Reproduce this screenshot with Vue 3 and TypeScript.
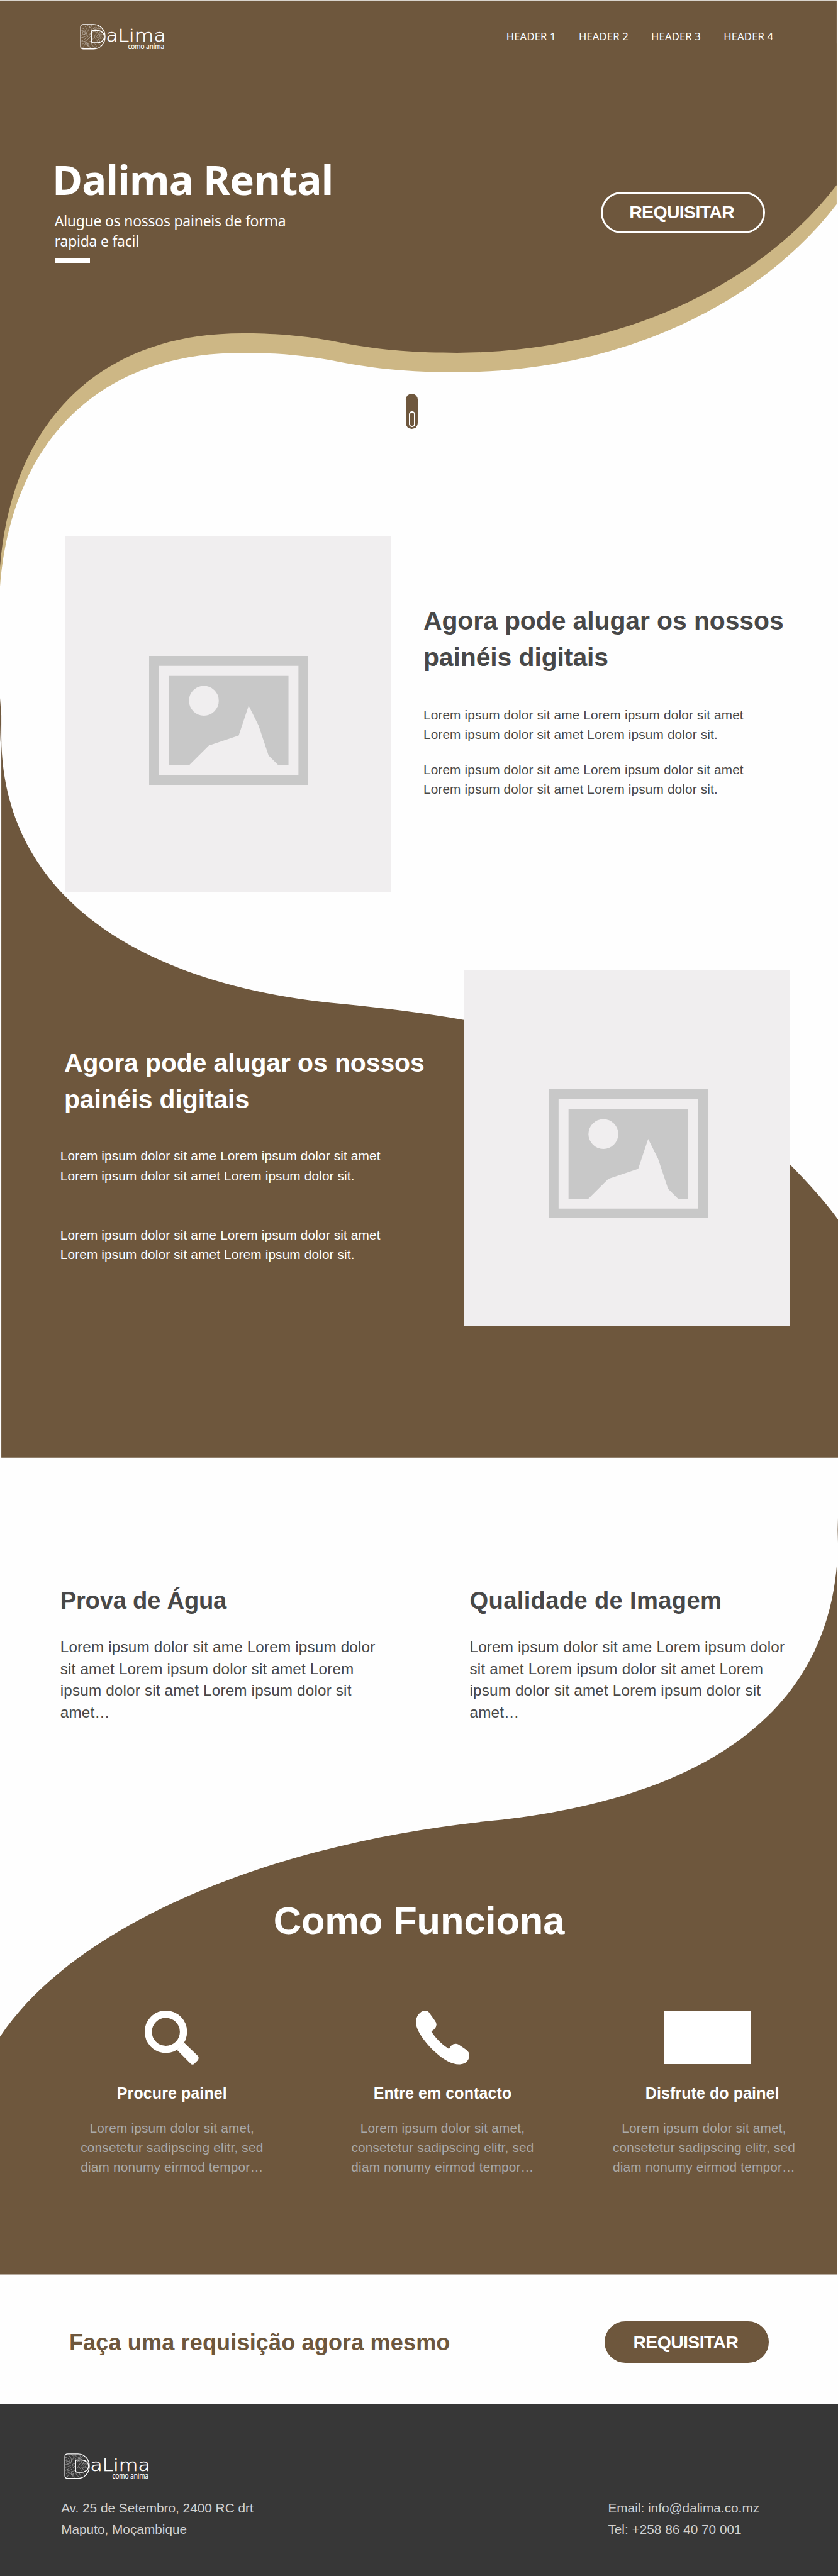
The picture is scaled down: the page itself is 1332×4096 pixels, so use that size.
<script setup lang="ts">
import { defineComponent, h } from 'vue'

interface Step {
  icon: 'search' | 'phone' | 'screen'
  title: string
  lines: string[]
}

const links: string[] = ['HEADER 1', 'HEADER 2', 'HEADER 3', 'HEADER 4']

const intro: string[] = [
  'Lorem ipsum dolor sit ame Lorem ipsum dolor sit amet',
  'Lorem ipsum dolor sit amet Lorem ipsum dolor sit.',
]

const features: { title: string; tone: string }[] = [
  { title: 'Prova de Água', tone: 'tight' },
  { title: 'Qualidade de Imagem', tone: 'loose' },
]

const featureLines: string[] = [
  'Lorem ipsum dolor sit ame Lorem ipsum dolor',
  'sit amet Lorem ipsum dolor sit amet Lorem',
  'ipsum dolor sit amet Lorem ipsum dolor sit',
  'amet…',
]

const stepLines: string[] = [
  'Lorem ipsum dolor sit amet,',
  'consetetur sadipscing elitr, sed',
  'diam nonumy eirmod tempor…',
]

const steps: Step[] = [
  { icon: 'search', title: 'Procure painel', lines: stepLines },
  { icon: 'phone', title: 'Entre em contacto', lines: stepLines },
  { icon: 'screen', title: 'Disfrute do painel', lines: stepLines },
]

/* Brand mark: patterned double D followed by the wordmark. */
const BrandLogo = defineComponent({
  name: 'BrandLogo',
  setup: () => () =>
    h('svg', { viewBox: '70 68 600 204', width: 200, height: 68, fill: 'none', stroke: '#fff', overflow: 'visible' }, [
      h('g', { 'stroke-width': 3.5, opacity: 0.5 }, [
        h('path', { d: 'M78 150C110 148 128 128 140 84M78 168C120 160 150 130 190 112M80 190C110 176 140 150 150 134M88 182C84 198 104 194 118 184L150 152M84 214C104 196 128 200 148 188M98 84C122 100 126 122 112 146M118 80C140 92 150 104 152 118M78 100C92 100 108 112 108 128' }),
        h('path', { d: 'M150 80C150 100 166 112 186 108M178 82C178 100 192 110 212 104M188 104L202 88M196 118L168 160L200 204M212 122L184 160L212 198M160 118L190 136M156 180L172 160M88 240L110 204L138 240M116 198L144 240M150 204C150 222 170 236 190 240M172 208L186 230M198 206L212 222' }),
        h('circle', { cx: 97, cy: 136, r: 10 }),
        h('circle', { cx: 87, cy: 120, r: 5 }),
        h('circle', { cx: 127, cy: 216, r: 7 }),
        h('circle', { cx: 172, cy: 104, r: 7 }),
        h('circle', { cx: 211, cy: 157, r: 7 }),
        h('ellipse', { cx: 211, cy: 157, rx: 18, ry: 15 }),
      ]),
      h('path', { 'stroke-width': 6, d: 'M94 76H165C212 76 243 116 243 160C243 205 212 244 165 244H92Q75 244 75 226V94Q75 76 94 76Z' }),
      h('path', { 'stroke-width': 6, d: 'M158 118H190C218 118 238 138 238 160C238 182 218 202 190 202H160Q149 202 149 190V127Q149 118 158 118Z' }),
      h('text', { x: 249, y: 193, class: 'brand-name', textLength: 412, lengthAdjust: 'spacingAndGlyphs' }, 'aLima'),
      h('text', { x: 401, y: 247, class: 'brand-tag', textLength: 249, lengthAdjust: 'spacingAndGlyphs' }, 'como anima'),
    ]),
})

/* Empty picture frame shown until a panel photo is available. */
const PicturePlaceholder = defineComponent({
  name: 'PicturePlaceholder',
  setup: () => () =>
    h('div', { class: 'placeholder' }, [
      h('svg', { viewBox: '0 0 16 13', width: 365, height: 296.5 }, [
        h('path', { fill: '#c8c8c8', 'fill-rule': 'evenodd', d: 'M0 0H16V13H0ZM1 1V12H15V1Z' }),
        h('path', { fill: '#c8c8c8', d: 'M2 2H14V11H13L12 10L11 7L10 5L9 8L6 9L4 11H2Z' }),
        h('circle', { fill: '#f0eeef', cx: 5.5, cy: 4.5, r: 1.5 }),
      ]),
    ]),
})
</script>

<template>
  <div class="page">
    <svg class="waves" viewBox="0 0 1920 5904" width="1920" height="5904" aria-hidden="true">
      <path
        fill="#cdb785"
        d="M0 100V1344.500C25 1024.500 215 808.500 555 808.500C650 808.500 715 816.500 784 830.500C880 848.500 960 853 1047 853C1394 853 1727 715.500 1917 468V100Z"
      />
      <path
        fill="#6e573d"
        d="M0 1V1300C25 980 215 764 555 764C650 764 715 772 784 786C880 804 960 808.5 1047 808.5C1394 808.5 1727 671 1917 424V1Z"
      />
      <path fill="#6e573d" d="M0 1600Q1.500 1620 3 1640V1700Q1 1720 0 1660Z" />
      <path
        fill="#6e573d"
        d="M3 1690C6 2060 330 2260 784 2301C880 2311 970 2321 1065 2338C1400 2395 1660 2470 1811 2670Q1880 2740 1920 2795V3341H3Z"
      />
      <path
        fill="#6e573d"
        d="M1920 3479Q1916.500 3530 1918 3580C1890 3960 1560 4128 1127 4173C640 4222 180 4400 0 4668V5213H1917.500V3580Z"
      />
    </svg>

    <section class="hero">
      <header class="topbar">
        <BrandLogo class="logo" />
        <nav class="nav">
          <a v-for="link in links" :key="link">{{ link }}</a>
        </nav>
      </header>
      <div class="hero-body">
        <div class="hero-copy">
          <h1>Dalima Rental</h1>
          <p>Alugue os nossos paineis de forma<br />rapida e facil</p>
          <span class="bar"></span>
        </div>
        <button class="pill outline">REQUISITAR</button>
      </div>
      <div class="scroll"><span></span></div>
    </section>

    <section class="panel first">
      <PicturePlaceholder />
      <div class="copy">
        <h2>Agora pode alugar os nossos<br />painéis digitais</h2>
        <p v-for="n in 2" :key="n">
          <span v-for="line in intro" :key="line">{{ line }}</span>
        </p>
      </div>
    </section>

    <section class="panel second">
      <div class="copy">
        <h2>Agora pode alugar os nossos<br />painéis digitais</h2>
        <p v-for="n in 2" :key="n">
          <span v-for="line in intro" :key="line">{{ line }}</span>
        </p>
      </div>
      <PicturePlaceholder />
    </section>

    <section class="features">
      <article v-for="feature in features" :key="feature.title">
        <h3 :class="feature.tone">{{ feature.title }}</h3>
        <p>
          <span v-for="line in featureLines" :key="line">{{ line }}</span>
        </p>
      </article>
    </section>

    <section class="how">
      <h2>Como Funciona</h2>
      <div class="steps">
        <article v-for="step in steps" :key="step.title" :class="step.icon">
          <svg v-if="step.icon === 'search'" viewBox="0 0 123.500 124" width="123.500" height="124">
            <circle cx="48.500" cy="48.500" r="40.300" fill="none" stroke="#fff" stroke-width="16.400" />
            <path fill="#fff" d="M90.300 73.500L121 103Q126 109 121 114.500L114 121.500Q109.500 126 105 121.500L74 90Z" />
          </svg>
          <svg v-else-if="step.icon === 'phone'" viewBox="0 0 123 124" width="123" height="124">
            <path
              fill="#fff"
              d="M21 0C25 0 28 1 30 4L43 22Q52 33 42 43L35.500 47.500C44 62 59 77 76 88L80 81Q89 73 98 78L116 90Q123 96 123 104C121 114 115 122 103 123C88 125 66 116 42 93C16 68 0 42 0 27C0 13 9 1 21 0Z"
            />
          </svg>
          <div v-else class="screen-box"></div>
          <h4>{{ step.title }}</h4>
          <p>
            <span v-for="line in step.lines" :key="line">{{ line }}</span>
          </p>
        </article>
      </div>
    </section>

    <section class="cta">
      <h3>Faça uma requisição agora mesmo</h3>
      <button class="pill solid">REQUISITAR</button>
    </section>

    <footer class="footer">
      <div>
        <BrandLogo class="logo" />
        <p>Av. 25 de Setembro, 2400 RC drt<br />Maputo, Moçambique</p>
      </div>
      <p>Email: info@dalima.co.mz<br />Tel: +258 86 40 70 001</p>
    </footer>
  </div>
</template>

<style>
body {
  margin: 0;
  background: #fefefe;
  overflow-x: hidden;
}
.brand-name {
  font: 200 114px "DejaVu Sans", sans-serif;
  fill: #fff;
  stroke: #fff;
  stroke-width: 2.5px;
}
.brand-tag {
  font: 400 56px "Open Sans", sans-serif;
  fill: #fff;
  stroke: #fff;
  stroke-width: 1px;
}
.placeholder {
  box-sizing: border-box;
  width: 747px;
  height: 815px;
  padding: 273px 0 0 193.5px;
  background: #f0eeef;
  flex: none;
}
.placeholder svg {
  display: block;
}
</style>

<style scoped>
.page {
  position: relative;
  isolation: isolate;
  width: 1920px;
  height: 5904px;
  overflow: hidden;
  zoom: 0.69375;
  font-family: "Liberation Sans", Arial, sans-serif;
  color: #484848;
}
.waves {
  position: absolute;
  inset: 0;
  z-index: -1;
}
h1, h2, h3, h4, p {
  margin: 0;
}
p span {
  display: block;
  white-space: nowrap;
}
.logo {
  display: block;
}

.hero {
  height: 1230px;
  color: #fff;
  font-family: "Noto Sans", sans-serif;
}
.topbar {
  display: flex;
  justify-content: space-between;
  height: 150px;
  padding-left: 183px;
}
.topbar .logo {
  margin-top: 53px;
}
.nav {
  display: flex;
  margin-top: 69px;
  width: 760px;
}
.nav a {
  width: 166px;
  font-size: 24px;
  line-height: 30px;
  letter-spacing: 0.2px;
  white-space: nowrap;
}
.hero-body {
  display: flex;
  justify-content: space-between;
  height: 752px;
  padding: 0 167px 0 124px;
}
.hero-copy {
  padding-top: 210px;
}
.hero-copy h1 {
  margin-left: -4px;
  font-size: 94px;
  line-height: 100px;
  letter-spacing: -1.1px;
}
.hero-copy p {
  margin: 25px 0 0 1px;
  font-size: 33px;
  line-height: 45px;
  letter-spacing: -0.28px;
}
.bar {
  display: block;
  width: 81px;
  height: 11px;
  margin: 16px 0 0 1px;
  background: #fff;
}
.pill {
  box-sizing: border-box;
  width: 377px;
  height: 96px;
  padding: 0 5px 0 0;
  border: 5px solid #fff;
  border-radius: 48px;
  background: #6e573d;
  color: #fff;
  font: 700 41px "Liberation Sans", Arial, sans-serif;
  letter-spacing: -0.91px;
}
.outline {
  margin-top: 289px;
}
.solid {
  border-color: #6e573d;
}
.scroll {
  box-sizing: border-box;
  width: 27px;
  height: 81px;
  margin-left: 930px;
  padding: 41px 0 0 7px;
  border-radius: 13.5px;
  background: #6e573d;
}
.scroll span {
  box-sizing: border-box;
  display: block;
  width: 14px;
  height: 36px;
  border: 3px solid #fff;
  border-radius: 7px;
}

.panel {
  display: flex;
}
.panel h2 {
  font-size: 59px;
  line-height: 84px;
  letter-spacing: -0.14px;
  white-space: nowrap;
}
.panel p {
  font-size: 30px;
  line-height: 44.8px;
  letter-spacing: 0.2px;
}
.first {
  height: 815px;
  padding-left: 148px;
}
.first .copy {
  padding: 151px 0 0 75px;
}
.first p {
  margin: 67px 0 0;
}
.first p + p {
  margin-top: 35px;
}
.second {
  box-sizing: border-box;
  height: 1296px;
  padding: 178px 0 0 138px;
  color: #fff;
}
.second .copy {
  width: 926px;
  padding-top: 171px;
}
.second h2 {
  margin-left: 9px;
}
.second p {
  margin-top: 65px;
}
.second p + p {
  margin-top: 91.4px;
}

.features {
  display: flex;
  height: 714px;
  padding: 297px 0 0 138px;
}
.features article {
  flex: none;
  width: 938px;
}
.features h3 {
  font-size: 55px;
  line-height: 60px;
}
.features .tight {
  letter-spacing: -0.3px;
}
.features .loose {
  letter-spacing: 0.5px;
}
.features p {
  margin-top: 52.5px;
  font-size: 35px;
  line-height: 50px;
  letter-spacing: 0.24px;
}

.how {
  height: 861px;
  color: #fff;
}
.how h2 {
  font-size: 88.5px;
  line-height: 100px;
  letter-spacing: -0.13px;
  text-align: center;
}
.steps {
  display: flex;
  padding: 156px 0 0 184px;
}
.steps article {
  display: flex;
  flex-direction: column;
  align-items: center;
  width: 420px;
}
.steps .phone {
  margin-left: 200px;
}
.steps .screen {
  margin-left: 179px;
}
.steps h4 {
  margin-top: 46px;
  font-size: 36px;
  line-height: 40px;
  letter-spacing: 0.15px;
  white-space: nowrap;
}
.steps p {
  margin-top: 37px;
  color: #aaa9a8;
  font-size: 30px;
  line-height: 44.8px;
  letter-spacing: 0.26px;
  text-align: center;
}
.screen-box {
  width: 198px;
  height: 123px;
  margin: 0 0 1px 16px;
  background: #fff;
}
.screen h4 {
  margin-left: 38px;
}

.cta {
  display: flex;
  justify-content: space-between;
  height: 191px;
  padding: 107px 158px 0 158.5px;
}
.cta h3 {
  margin-top: 19px;
  color: #6e573d;
  font-size: 52px;
  line-height: 60px;
  letter-spacing: 0.2px;
}

.footer {
  display: flex;
  justify-content: space-between;
  align-items: flex-start;
  height: 400px;
  background: #373737;
  color: #d0d0d0;
  font-size: 30px;
  line-height: 49.4px;
}
.footer > div {
  padding: 110px 0 0 140px;
}
.footer .logo {
  margin-left: 7px;
}
.footer > div p {
  margin-top: 35px;
}
.footer > p {
  width: 527px;
  margin-top: 213px;
}
</style>
